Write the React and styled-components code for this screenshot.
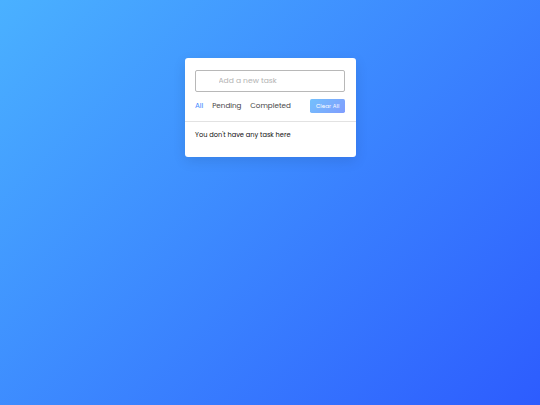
import React, { useState } from 'react';
import styled, { createGlobalStyle } from 'styled-components';

const GlobalStyle = createGlobalStyle`
	* {
		margin: 0;
		padding: 0;
		box-sizing: border-box;
	}
	body {
		width: 100%;
		height: 100vh;
		overflow: hidden;
		font-family: 'Poppins', 'Inter', 'Liberation Sans', sans-serif;
		background: linear-gradient(135deg, #4ab1ff, #2d5cfe);
	}
`;

const Wrapper = styled.div`
	width: 171px;
	margin: 58px auto 0;
	padding: 11.8px 0 12.6px;
	font-size: 7px;
	background: #fff;
	border-radius: 3px;
	box-shadow: 0 4px 13px rgba(0, 0, 0, 0.1);
`;

const TaskInput = styled.div`
	height: 22px;
	padding: 0 10.5px;
`;

const Input = styled.input`
	display: block;
	height: 100%;
	width: 100%;
	outline: none;
	font-family: inherit;
	font-size: 7.6px;
	color: #333;
	border-radius: 2px;
	padding: 0 8px 0 22.5px;
	border: 1px solid #b8b8b8;
	&::placeholder {
		color: #b3b3b3;
	}
`;

const Controls = styled.div`
	display: flex;
	align-items: center;
	justify-content: space-between;
	padding: 7.6px 10.5px;
	border-bottom: 1px solid #e2e2e2;
`;

const Filters = styled.div`
	display: flex;
	align-items: center;
`;

const Filter = styled.span`
	margin: 0 4.4px;
	font-size: 7.2px;
	color: ${(props) => (props.$active ? '#3c87ff' : '#444')};
	cursor: pointer;
	&:first-child {
		margin-left: 0;
	}
`;

const ClearBtn = styled.button`
	border: none;
	opacity: 0.6;
	outline: none;
	color: #fff;
	font-family: inherit;
	font-size: 5.5px;
	padding: 3px 5.5px;
	height: 14px;
	border-radius: 1.7px;
	letter-spacing: 0.1px;
	background: linear-gradient(135deg, #1798fb 0%, #2d5cfe 100%);
`;

const TaskBox = styled.ul`
	list-style: none;
	margin-top: 8.4px;
	padding: 0 8.4px 4.2px 10.5px;
	font-size: 6.65px;
`;

const Empty = styled.span`
	color: #111;
`;

const filters = ['All', 'Pending', 'Completed'];

export default function App() {
	const [filter, setFilter] = useState('All');
	return (
		<>
			<GlobalStyle />
			<Wrapper>
				<TaskInput>
					<Input type="text" placeholder="Add a new task" />
				</TaskInput>
				<Controls>
					<Filters>
						{filters.map((f) => (
							<Filter key={f} $active={f === filter} onClick={() => setFilter(f)}>
								{f}
							</Filter>
						))}
					</Filters>
					<ClearBtn>Clear All</ClearBtn>
				</Controls>
				<TaskBox>
					<Empty>You don't have any task here</Empty>
				</TaskBox>
			</Wrapper>
		</>
	);
}
